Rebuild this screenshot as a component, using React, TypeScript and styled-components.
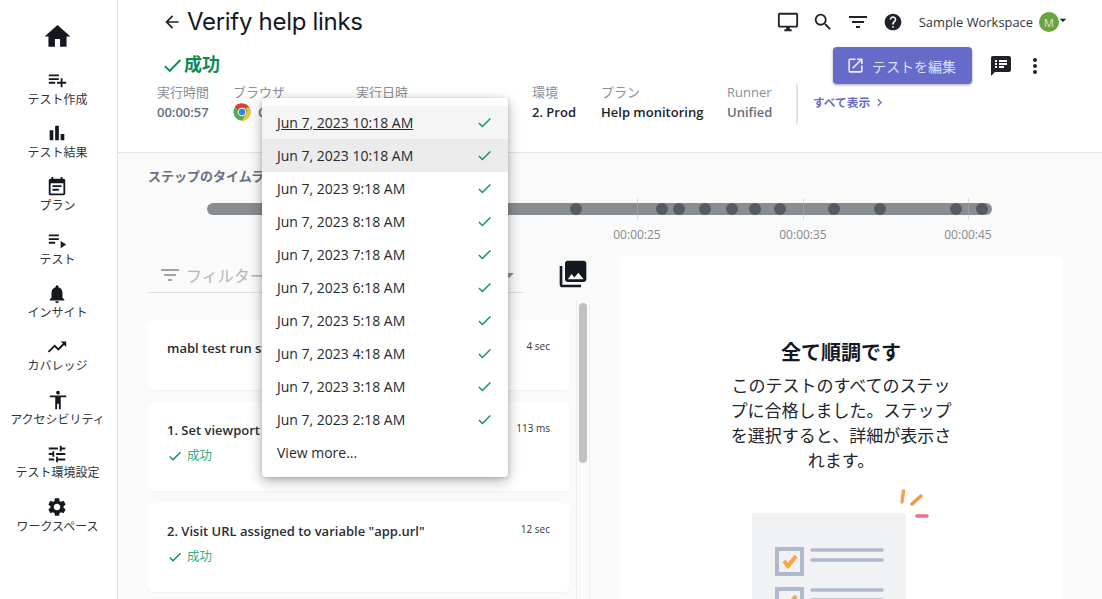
import React from "react";
import styled, { createGlobalStyle } from "styled-components";
import {
  MdHome, MdPlaylistAdd, MdBarChart, MdEventNote, MdPlaylistPlay, MdNotifications, MdTrendingUp,
  MdAccessibility, MdTune, MdSettings, MdArrowBack, MdOutlineDesktopWindows, MdSearch, MdFilterList,
  MdHelp, MdArrowDropDown, MdCheck, MdOpenInNew, MdSpeakerNotes, MdMoreVert, MdChevronRight, MdPhotoLibrary,
} from "react-icons/md";

const FONT = `"Open Sans", "Noto Sans CJK JP", sans-serif`;

const Global = createGlobalStyle`
  html, body { margin: 0; padding: 0; height: 599px; overflow: hidden; background: #fff; }
  body { font-family: ${FONT}; color: #1f2329; }
  * { box-sizing: border-box; }
`;

const Page = styled.div`
  display: flex;
  width: 1102px;
  height: 599px;
  overflow: hidden;
  position: relative;
`;
const Sidebar = styled.nav`
  width: 118px;
  flex: none;
  border-right: 1px solid #e2e2e2;
  padding-right: 2px;
  display: flex;
  flex-direction: column;
  align-items: center;
  padding-top: 21px;
`;
const HomeLink = styled.div`
  height: 28px;
  margin-bottom: 13px;
  font-size: 31px;
  line-height: 0;
  color: #14181f;
`;
const NavItem = styled.div`
  height: 53.4px;
  display: flex;
  flex-direction: column;
  align-items: center;
  padding-top: 7px;
  font-size: 12px;
  line-height: 16px;
  color: #30343a;
  white-space: nowrap;
  svg { font-size: 22px; color: #14181f; display: block; margin-bottom: 0.5px; }
`;
const Main = styled.main`
  flex: 1;
  display: flex;
  flex-direction: column;
  min-width: 0;
`;
const Header = styled.header`
  height: 153px;
  flex: none;
  background: #fff;
  border-bottom: 1px solid #e3e3e3;
  padding: 0 33px 0 39px;
  display: flex;
  flex-direction: column;
`;
const TopRow = styled.div`
  height: 44px;
  display: flex;
  align-items: center;
  justify-content: space-between;
`;
const TitleWrap = styled.div`
  display: flex;
  align-items: center;
  gap: 5px;
  margin-left: 5px;
  svg { font-size: 20px; color: #1f2329; }
`;
const Title = styled.h1`
  margin: 0;
  font: 400 24px/30px Inter, sans-serif;
  letter-spacing: -0.3px;
  color: #14181f;
`;
const TopTools = styled.div`
  display: flex;
  align-items: center;
  svg { color: #1f2329; }
`;
const ToolIcon = styled.span<{ $size: number }>`
  width: 35px;
  display: flex;
  justify-content: center;
  font-size: ${(p) => p.$size}px;
  line-height: 0;
`;
const Workspace = styled.span`
  margin-left: 8px;
  font-size: 12.9px;
  color: #30343a;
  white-space: nowrap;
`;
const Avatar = styled.span`
  width: 20px;
  height: 20px;
  margin-left: 6px;
  border-radius: 50%;
  background: #6aa341;
  color: #dcebcf;
  font-size: 11px;
  display: flex;
  align-items: center;
  justify-content: center;
`;
const Caret = styled.span`
  width: 12px;
  margin-left: -2px;
  margin-top: -5px;
  font-size: 16px;
  line-height: 0;
  svg { margin-left: -2px; }
`;
const StatusRow = styled.div`
  height: 38px;
  display: flex;
  align-items: flex-start;
  justify-content: space-between;
`;
const BigStatus = styled.div`
  display: flex;
  align-items: center;
  margin: 7px 0 0 4px;
  font-size: 18px;
  line-height: 26px;
  font-weight: 700;
  color: #0f8a57;
  svg { font-size: 23px; margin-right: 0; margin-top: 3px; }
`;
const Actions = styled.div`
  display: flex;
  align-items: center;
  margin-top: 3px;
  margin-right: 22px;
`;
const EditButton = styled.button`
  width: 139px;
  height: 37px;
  border: 0;
  border-radius: 4px;
  background: #666bc9;
  color: #dfe0f5;
  font-family: ${FONT};
  font-size: 14px;
  display: flex;
  align-items: center;
  gap: 7px;
  padding: 0 0 0 13px;
  box-shadow: 0 1px 3px rgba(0, 0, 0, 0.35);
  svg { font-size: 19px; color: #eeeefa; }
`;
const ActionIcon = styled.span<{ $ml: number }>`
  margin-left: ${(p) => p.$ml}px;
  font-size: 24px;
  line-height: 0;
  color: #1f2329;
`;
const MetaRow = styled.div`
  display: flex;
  align-items: flex-start;
  padding-top: 0;
`;
const MetaCol = styled.div<{ $w: number }>`
  width: ${(p) => p.$w}px;
  flex: none;
  font-size: 13px;
  line-height: 20px;
`;
const MetaLabel = styled.div`
  color: #8a8f99;
  white-space: nowrap;
`;
const MetaValue = styled.div<{ $muted?: boolean }>`
  color: ${(p) => (p.$muted ? "#666e7d" : "#1f2329")};
  font-weight: 600;
  white-space: nowrap;
  display: flex;
  align-items: center;
  gap: 7px;
`;
const MetaDivider = styled.div`
  width: 2px;
  height: 40px;
  margin-top: 2px;
  background: #e0e1e4;
`;
const ShowAll = styled.div`
  margin-left: 15px;
  margin-top: 10px;
  display: flex;
  align-items: center;
  gap: 2px;
  font-size: 11.7px;
  line-height: 20px;
  font-weight: 700;
  color: #666bc9;
  white-space: nowrap;
  svg { font-size: 15px; }
`;
const Body = styled.div`
  flex: 1;
  min-height: 0;
  background: #fafafa;
  padding: 0 30px;
  display: flex;
  flex-direction: column;
`;
const TimelineTitle = styled.div`
  margin-top: 13px;
  font-size: 13px;
  line-height: 20px;
  font-weight: 700;
  color: #6a7080;
  white-space: nowrap;
`;
const Track = styled.div`
  position: relative;
  margin: 17px 0 0 59px;
  width: 785px;
  height: 12px;
  border-radius: 6px;
  background: #8a8d90;
`;
const Dot = styled.span`
  position: absolute;
  top: 0;
  width: 12px;
  height: 12px;
  border-radius: 50%;
  background: #565a62;
`;
const Tick = styled.span`
  position: absolute;
  top: -5px;
  width: 1px;
  height: 22px;
  background: rgba(180, 180, 180, 0.45);
`;
const TickLabel = styled.span`
  position: absolute;
  top: 24px;
  transform: translateX(-50%);
  font-size: 12px;
  line-height: 16px;
  color: #85888c;
`;
const Lower = styled.div`
  margin-top: 41px;
  flex: 1;
  min-height: 0;
  display: flex;
  gap: 30px;
`;
const StepsCol = styled.div`
  width: 442px;
  flex: none;
  display: flex;
  flex-direction: column;
`;
const FilterRow = styled.div`
  height: 36px;
  margin-top: 1px;
  display: flex;
  align-items: center;
  position: relative;
`;
const FilterBox = styled.div`
  width: 375px;
  height: 36px;
  border-bottom: 1px solid #e0e0e0;
  display: flex;
  align-items: center;
  padding-left: 10px;
  gap: 4px;
  font-size: 16px;
  color: #b5b5b5;
  svg { font-size: 24px; color: #a3a3a3; }
`;
const FilterCaret = styled.span`
  position: absolute;
  left: 349px;
  top: 6px;
  font-size: 24px;
  line-height: 0;
  color: #8f8f8f;
`;
const GalleryIcon = styled.span`
  margin-left: 34px;
  margin-top: -2px;
  font-size: 32px;
  line-height: 0;
  color: #14181f;
`;
const StepsScroll = styled.div`
  flex: 1;
  min-height: 0;
  margin-top: 7px;
  display: flex;
  overflow: hidden;
`;
const StepList = styled.div`
  width: 422px;
  flex: none;
  padding-top: 20px;
  display: flex;
  flex-direction: column;
  gap: 12px;
`;
const StepCard = styled.div<{ $h: number }>`
  height: ${(p) => p.$h}px;
  flex: none;
  background: #fff;
  border-radius: 6px;
  box-shadow: 0 1px 2px rgba(0, 0, 0, 0.04);
  padding: 18px 20px 0 19px;
`;
const StepHead = styled.div`
  display: flex;
  align-items: flex-start;
  justify-content: space-between;
`;
const StepName = styled.div`
  font-size: 13px;
  line-height: 20px;
  font-weight: 600;
  color: #2a2e35;
  white-space: nowrap;
`;
const StepTime = styled.div`
  font-size: 10px;
  line-height: 16px;
  color: #30343a;
  white-space: nowrap;
`;
const StepStatus = styled.div`
  margin-top: 6px;
  display: flex;
  align-items: center;
  gap: 4px;
  font-size: 12.5px;
  line-height: 20px;
  color: #36ad80;
  svg { font-size: 16px; color: #0f8a57; }
`;
const ScrollRail = styled.div`
  width: 14px;
  margin-left: 6px;
  flex: none;
  border-left: 1px solid #eeeeee;
  border-right: 1px solid #eeeeee;
  padding: 3px 2px;
`;
const ScrollThumb = styled.div`
  height: 160px;
  border-radius: 4px;
  background: #c1c1c1;
`;
const SummaryPanel = styled.section`
  width: 442px;
  flex: none;
  background: #fff;
  border-radius: 6px 6px 0 0;
  display: flex;
  flex-direction: column;
  align-items: center;
  padding-top: 84px;
`;
const SummaryTitle = styled.div`
  font-size: 20px;
  line-height: 26px;
  font-weight: 700;
  color: #14181f;
`;
const SummaryText = styled.p`
  width: 228px;
  margin: 7px 0 0;
  text-align: center;
  font-size: 17px;
  line-height: 25px;
  color: #22262c;
`;
const Illustration = styled.svg`
  margin-top: 16px;
  margin-left: 6px;
  flex: none;
`;
const Menu = styled.div`
  position: absolute;
  left: 262px;
  top: 98px;
  width: 246px;
  height: 379px;
  background: #fff;
  border-radius: 4px;
  padding: 8px 0;
  box-shadow: 0 4px 14px rgba(0, 0, 0, 0.3), 0 1px 4px rgba(0, 0, 0, 0.15);
  z-index: 5;
`;
const MenuItem = styled.div<{ $state?: "focus" | "selected" }>`
  height: 33px;
  padding: 0 15px;
  display: flex;
  align-items: center;
  justify-content: space-between;
  font-size: 14px;
  color: #262a30;
  white-space: nowrap;
  background: ${(p) => (p.$state === "focus" ? "#f5f5f5" : p.$state === "selected" ? "#ebebeb" : "#fff")};
  text-decoration: ${(p) => (p.$state === "focus" ? "underline" : "none")};
  svg { font-size: 17px; color: #13915f; }
`;

const Chrome = () => (
  <svg width="18" height="18" viewBox="0 0 48 48">
    <circle cx="24" cy="24" r="23" fill="#4caf50" />
    <path d="M24 1a23 23 0 0 1 19.9 11.5H24a11.5 11.5 0 0 0-10.6 7L5.2 9.6A23 23 0 0 1 24 1z" fill="#e53935" />
    <path d="M43.9 12.5A23 23 0 0 1 24 47l10-17.2a11.5 11.5 0 0 0 0-17.3z" fill="#fbc02d" />
    <circle cx="24" cy="24" r="11.5" fill="#fff" />
    <circle cx="24" cy="24" r="8.8" fill="#3f7fe0" />
  </svg>
);

const nav: [React.ComponentType, string][] = [
  [MdPlaylistAdd, "テスト作成"],
  [MdBarChart, "テスト結果"],
  [MdEventNote, "プラン"],
  [MdPlaylistPlay, "テスト"],
  [MdNotifications, "インサイト"],
  [MdTrendingUp, "カバレッジ"],
  [MdAccessibility, "アクセシビリティ"],
  [MdTune, "テスト環境設定"],
  [MdSettings, "ワークスペース"],
];
const dots = [576, 661.5, 679, 704.5, 732, 754.5, 780, 834, 880, 956, 982];
const ticks = [[637, "00:00:25"], [803, "00:00:35"], [968, "00:00:45"]] as const;
const runs = [
  "Jun 7, 2023 10:18 AM", "Jun 7, 2023 10:18 AM", "Jun 7, 2023 9:18 AM", "Jun 7, 2023 8:18 AM",
  "Jun 7, 2023 7:18 AM", "Jun 7, 2023 6:18 AM", "Jun 7, 2023 5:18 AM", "Jun 7, 2023 4:18 AM",
  "Jun 7, 2023 3:18 AM", "Jun 7, 2023 2:18 AM",
];

export default function App() {
  return (
    <Page>
      <Global />
      <Sidebar>
        <HomeLink><MdHome /></HomeLink>
        {nav.map(([Icon, label]) => (
          <NavItem key={label}><Icon />{label}</NavItem>
        ))}
      </Sidebar>
      <Main>
        <Header>
          <TopRow>
            <TitleWrap><MdArrowBack /><Title>Verify help links</Title></TitleWrap>
            <TopTools>
              <ToolIcon $size={22}><MdOutlineDesktopWindows /></ToolIcon>
              <ToolIcon $size={22}><MdSearch /></ToolIcon>
              <ToolIcon $size={24}><MdFilterList /></ToolIcon>
              <ToolIcon $size={20}><MdHelp /></ToolIcon>
              <Workspace>Sample Workspace</Workspace>
              <Avatar>M</Avatar>
              <Caret><MdArrowDropDown /></Caret>
            </TopTools>
          </TopRow>
          <StatusRow>
            <BigStatus><MdCheck />成功</BigStatus>
            <Actions>
              <EditButton><MdOpenInNew />テストを編集</EditButton>
              <ActionIcon $ml={17}><MdSpeakerNotes /></ActionIcon>
              <ActionIcon $ml={10}><MdMoreVert /></ActionIcon>
            </Actions>
          </StatusRow>
          <MetaRow>
            <MetaCol $w={76}><MetaLabel>実行時間</MetaLabel><MetaValue $muted>00:00:57</MetaValue></MetaCol>
            <MetaCol $w={123}><MetaLabel>ブラウザ</MetaLabel><MetaValue $muted><Chrome />Chrome</MetaValue></MetaCol>
            <MetaCol $w={176}><MetaLabel>実行日時</MetaLabel><MetaValue>Jun 7, 2023</MetaValue></MetaCol>
            <MetaCol $w={69}><MetaLabel>環境</MetaLabel><MetaValue>2. Prod</MetaValue></MetaCol>
            <MetaCol $w={126}><MetaLabel>プラン</MetaLabel><MetaValue>Help monitoring</MetaValue></MetaCol>
            <MetaCol $w={69}><MetaLabel>Runner</MetaLabel><MetaValue $muted>Unified</MetaValue></MetaCol>
            <MetaDivider />
            <ShowAll>すべて表示<MdChevronRight /></ShowAll>
          </MetaRow>
        </Header>
        <Body>
          <TimelineTitle>ステップのタイムライン</TimelineTitle>
          <Track>
            {ticks.map(([x]) => <Tick key={x} style={{ left: x - 207 }} />)}
            {dots.map((x) => <Dot key={x} style={{ left: x - 213 }} />)}
            {ticks.map(([x, t]) => <TickLabel key={x} style={{ left: x - 207 }}>{t}</TickLabel>)}
          </Track>
          <Lower>
            <StepsCol>
              <FilterRow>
                <FilterBox><MdFilterList />フィルター</FilterBox>
                <FilterCaret><MdArrowDropDown /></FilterCaret>
                <GalleryIcon><MdPhotoLibrary /></GalleryIcon>
              </FilterRow>
              <StepsScroll>
                <StepList>
                  <StepCard $h={70}>
                    <StepHead><StepName>mabl test run start</StepName><StepTime>4 sec</StepTime></StepHead>
                  </StepCard>
                  <StepCard $h={89}>
                    <StepHead><StepName>1. Set viewport size</StepName><StepTime>113 ms</StepTime></StepHead>
                    <StepStatus><MdCheck />成功</StepStatus>
                  </StepCard>
                  <StepCard $h={89}>
                    <StepHead><StepName>2. Visit URL assigned to variable "app.url"</StepName><StepTime>12 sec</StepTime></StepHead>
                    <StepStatus><MdCheck />成功</StepStatus>
                  </StepCard>
                </StepList>
                <ScrollRail><ScrollThumb /></ScrollRail>
              </StepsScroll>
            </StepsCol>
            <SummaryPanel>
              <SummaryTitle>全て順調です</SummaryTitle>
              <SummaryText>このテストのすべてのステップに合格しました。ステップを選択すると、詳細が表示されます。</SummaryText>
              <Illustration width="184" height="120" viewBox="0 0 184 120">
                <rect x="0" y="24" width="154" height="96" rx="3" fill="#f1f2f4" />
                <path d="M150 13 L151.5 2" stroke="#fb9f4f" strokeWidth="3.5" strokeLinecap="round" />
                <path d="M160 15 L169 7" stroke="#fb9440" strokeWidth="3.5" strokeLinecap="round" />
                <path d="M165 27 L175 27" stroke="#f56c80" strokeWidth="3.5" strokeLinecap="round" />
                <rect x="25" y="60" width="25" height="25" fill="none" stroke="#aeb9cc" strokeWidth="4" />
                <path d="M32 72 L36 77 L44 67" fill="none" stroke="#fba43f" strokeWidth="4" />
                <path d="M60 61 H130 M60 71 H130" stroke="#aeb9cc" strokeWidth="3.5" strokeLinecap="round" />
                <rect x="25" y="100" width="25" height="25" fill="none" stroke="#aeb9cc" strokeWidth="4" />
                <path d="M32 112 L36 117 L44 107" fill="none" stroke="#fba43f" strokeWidth="4" />
                <path d="M60 101 H130 M60 111 H130" stroke="#aeb9cc" strokeWidth="3.5" strokeLinecap="round" />
              </Illustration>
            </SummaryPanel>
          </Lower>
        </Body>
      </Main>
      <Menu>
        {runs.map((r, i) => (
          <MenuItem key={i} $state={i === 0 ? "focus" : i === 1 ? "selected" : undefined}>
            {r}<MdCheck />
          </MenuItem>
        ))}
        <MenuItem>View more...</MenuItem>
      </Menu>
    </Page>
  );
}
